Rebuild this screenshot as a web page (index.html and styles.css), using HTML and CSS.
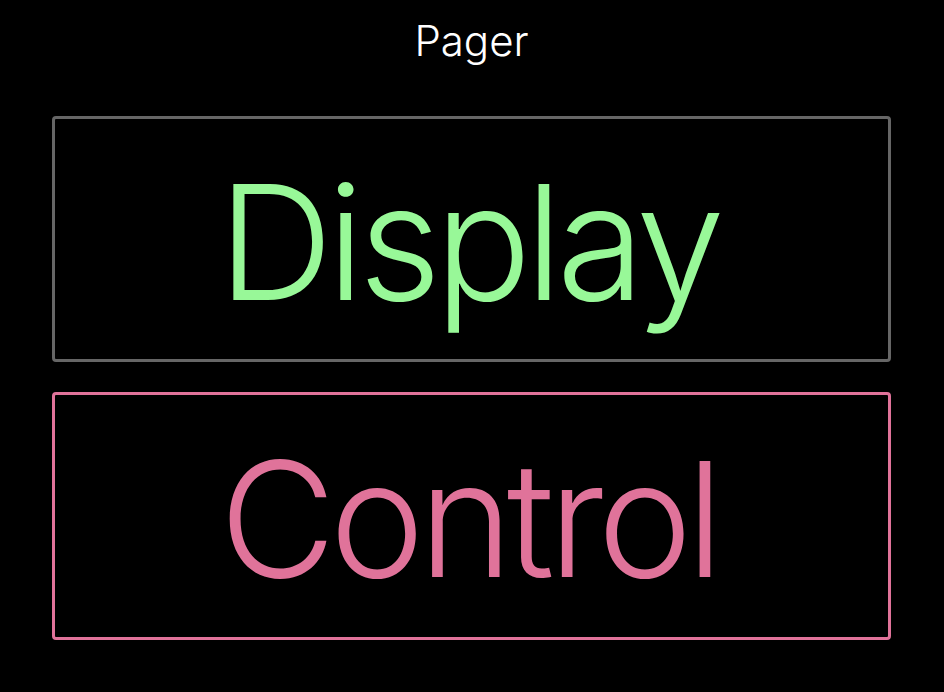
FILE: index.html
```html
<!DOCTYPE html>
<html lang="en">
<head>
    <meta charset="UTF-8">
    <meta name="viewport" content="width=device-width, initial-scale=1.0">
    <title>Pager</title>
    <link rel="stylesheet" href="styles.css">
</head>
<body>
    <div class="pager">
        <h1 class="pager-title">Pager</h1>

        <div class="panel panel-display">
            <span class="panel-label">Display</span>
        </div>

        <div class="panel panel-control">
            <span class="panel-label">Control</span>
        </div>
    </div>
</body>
</html>
```

FILE: styles.css
```css
html, body {
    margin: 0;
    background-color: #000;
}

body {
    font-family: Inter, "Noto Sans", sans-serif;
    color: #fff;
}

.pager {
    display: flex;
    flex-direction: column;
    padding: 16px 53px 0 52px;
}

.pager-title {
    margin: 0 0 50px;
    text-align: center;
    font-size: 42px;
    font-weight: 300;
    line-height: 50px;
}

.panel {
    box-sizing: border-box;
    display: flex;
    align-items: center;
    justify-content: center;
    padding-top: 6px;
    border: 3px solid #666;
    border-radius: 4px;
}

.panel-display {
    height: 246px;
    border-color: #666666;
    color: #98f898;
}

.panel-control {
    height: 248px;
    margin-top: 30px;
    border-color: #e0739a;
    color: #e0739a;
}

.panel-label {
    font-size: 160px;
    font-weight: 280;
    line-height: 1;
    letter-spacing: -6px;
    margin-left: -6px;
}
```
